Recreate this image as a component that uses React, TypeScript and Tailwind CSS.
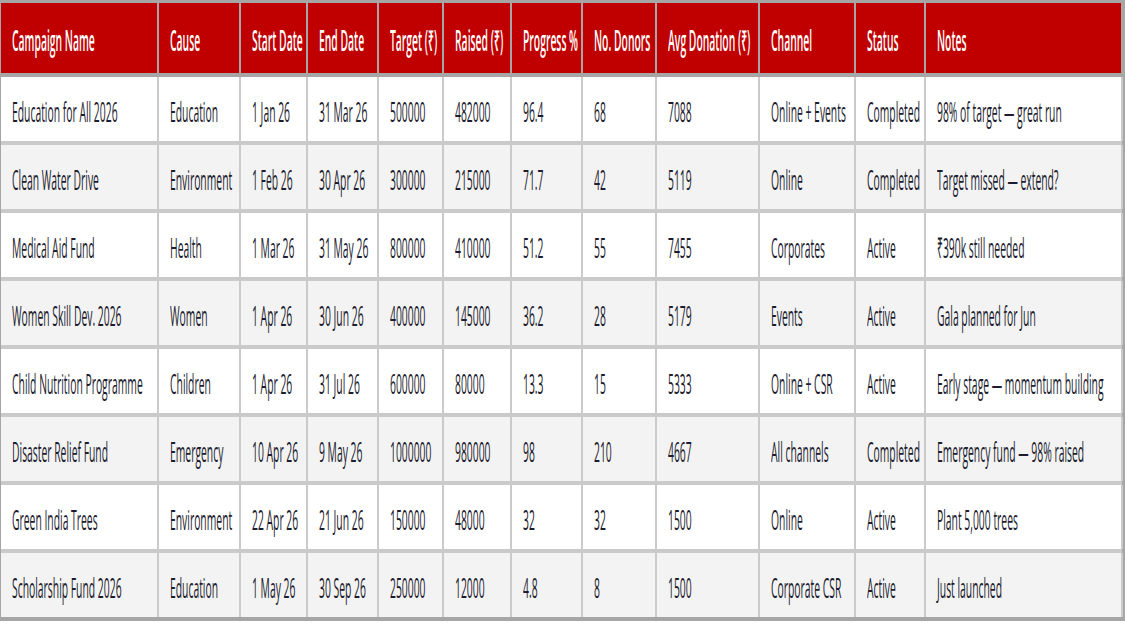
const headers = [
  'Campaign Name',
  'Cause',
  'Start Date',
  'End Date',
  'Target (₹)',
  'Raised (₹)',
  'Progress %',
  'No. Donors',
  'Avg Donation (₹)',
  'Channel',
  'Status',
  'Notes',
];

const rows = [
  ['Education for All 2026', 'Education', '1 Jan 26', '31 Mar 26', '500000', '482000', '96.4', '68', '7088', 'Online + Events', 'Completed', '98% of target — great run'],
  ['Clean Water Drive', 'Environment', '1 Feb 26', '30 Apr 26', '300000', '215000', '71.7', '42', '5119', 'Online', 'Completed', 'Target missed — extend?'],
  ['Medical Aid Fund', 'Health', '1 Mar 26', '31 May 26', '800000', '410000', '51.2', '55', '7455', 'Corporates', 'Active', '₹390k still needed'],
  ['Women Skill Dev. 2026', 'Women', '1 Apr 26', '30 Jun 26', '400000', '145000', '36.2', '28', '5179', 'Events', 'Active', 'Gala planned for Jun'],
  ['Child Nutrition Programme', 'Children', '1 Apr 26', '31 Jul 26', '600000', '80000', '13.3', '15', '5333', 'Online + CSR', 'Active', 'Early stage — momentum building'],
  ['Disaster Relief Fund', 'Emergency', '10 Apr 26', '9 May 26', '1000000', '980000', '98', '210', '4667', 'All channels', 'Completed', 'Emergency fund — 98% raised'],
  ['Green India Trees', 'Environment', '22 Apr 26', '21 Jun 26', '150000', '48000', '32', '32', '1500', 'Online', 'Active', 'Plant 5,000 trees'],
  ['Scholarship Fund 2026', 'Education', '1 May 26', '30 Sep 26', '250000', '12000', '4.8', '8', '1500', 'Corporate CSR', 'Active', 'Just launched'],
];

const cols =
  'grid grid-cols-[158px_82px_67px_71px_65px_68px_71px_74px_103px_96px_70px_197px]';

function Cell({ text, head }: { text: string; head?: boolean }) {
  return (
    <div
      className={`flex items-center pl-[11px] pt-[3px] border-r-2 ${
        head ? 'border-[#a6a6a6]' : 'border-[#cacaca]'
      }`}
    >
      <span
        className={`inline-block whitespace-nowrap origin-left scale-x-[0.37] text-[28px] leading-none ${
          head ? 'font-semibold text-white' : 'text-[#1c1c2e]'
        }`}
      >
        {text}
      </span>
    </div>
  );
}

export default function App() {
  return (
    <div
      className="w-[1125px] h-[625px] bg-white overflow-hidden"
      style={{ fontFamily: '"Open Sans", "Noto Sans", "DejaVu Sans", sans-serif' }}
    >
      <div className="w-[1125px] border-t-[3px] border-l border-r-[3px] border-b-4 border-[#a6a6a6] bg-[#cacaca]">
        <div className={`${cols} h-[74px] bg-[#c00000] border-b-4 border-[#a6a6a6]`}>
          {headers.map((h) => (
            <Cell key={h} text={h} head />
          ))}
        </div>
        <div className="flex flex-col gap-1">
          {rows.map((r, i) => (
            <div
              key={r[0]}
              className={`${cols} h-[64px] ${i % 2 === 0 ? 'bg-white' : 'bg-[#f3f3f3]'}`}
            >
              {r.map((c, j) => (
                <Cell key={j} text={c} />
              ))}
            </div>
          ))}
        </div>
      </div>
    </div>
  );
}
